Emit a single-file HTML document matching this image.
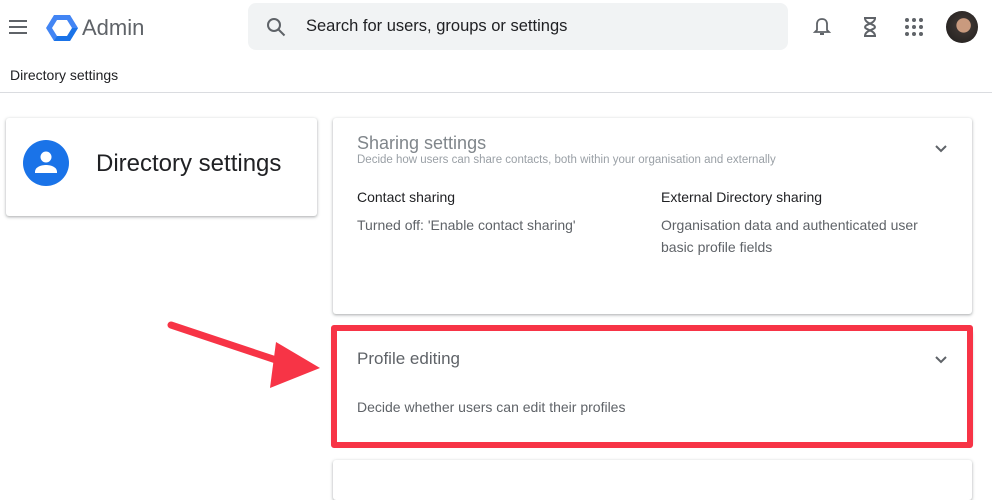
<!DOCTYPE html>
<html><head><meta charset="utf-8"><style>
*{box-sizing:border-box;margin:0;padding:0}
body{width:992px;height:479px;overflow:hidden;background:#fff;font-family:"Liberation Sans",Arial,sans-serif;position:relative;color:#202124}
.abs{position:absolute}
.card{position:absolute;background:#fff;border-radius:3px;box-shadow:0 1px 2px rgba(60,64,67,.3),0 1px 3px 1px rgba(60,64,67,.12)}
.g{color:#5f6368}
</style></head><body>
<svg class="abs" style="left:8px;top:17px" width="20" height="20" viewBox="0 0 20 20"><path d="M1 4h18M1 10h18M1 16h18" stroke="#5f6368" stroke-width="2"/></svg>
<svg class="abs" style="left:46px;top:14px" width="32" height="28" viewBox="0 0 32 28"><polygon points="8,1 24,1 32,14 24,27 8,27 0,14" fill="#4285f4"/><polygon points="16,14 32,14 24,27 8,27" fill="#1a73e8"/><polygon points="11,6 21,6 26,14 21,22 11,22 6,14" fill="#fff"/></svg>
<div class="abs g" style="left:82px;top:15px;font-size:22px;color:#5f6368">Admin</div>
<div class="abs" style="left:248px;top:3px;width:540px;height:47px;background:#f1f3f4;border-radius:8px"></div>
<svg class="abs" style="left:265px;top:16px" width="22" height="22" viewBox="0 0 22 22"><circle cx="9" cy="9" r="6" fill="none" stroke="#5f6368" stroke-width="2"/><path d="M13.5 13.5l6 6" stroke="#5f6368" stroke-width="2"/></svg>
<div class="abs" style="left:306px;top:17px;font-size:16.5px;color:#202124">Search for users, groups or settings</div>
<svg class="abs" style="left:812px;top:16px" width="20" height="22" viewBox="0 0 20 22"><path d="M10 3c-3 0-5 2-5 5v6l-2 2h14l-2-2V8c0-3-2-5-5-5z" fill="none" stroke="#5f6368" stroke-width="1.8"/><path d="M8 18h4" stroke="#5f6368" stroke-width="2"/></svg>
<svg class="abs" style="left:861px;top:15px" width="18" height="24" viewBox="0 0 18 24"><path d="M3 3h12M3 21h12M4 3c0 6 10 6 10 9s-10 3-10 9M14 3c0 6-10 6-10 9s10 3 10 9" fill="none" stroke="#5f6368" stroke-width="2"/></svg>
<svg class="abs" style="left:905px;top:18px" width="18" height="18" viewBox="0 0 18 18" fill="#5f6368"><circle cx="2" cy="2" r="2"/><circle cx="9" cy="2" r="2"/><circle cx="16" cy="2" r="2"/><circle cx="2" cy="9" r="2"/><circle cx="9" cy="9" r="2"/><circle cx="16" cy="9" r="2"/><circle cx="2" cy="16" r="2"/><circle cx="9" cy="16" r="2"/><circle cx="16" cy="16" r="2"/></svg>
<div class="abs" style="left:946px;top:11px;width:32px;height:32px;border-radius:50%;background:radial-gradient(circle at 55% 45%,#c99a7e 0 28%,#3a3330 30%,#2a2624 70%)"></div>
<div class="abs" style="left:10px;top:67px;font-size:14px">Directory settings</div>
<div class="abs" style="left:0;top:92px;width:992px;height:1px;background:#dadce0"></div>
<div class="card" style="left:6px;top:118px;width:311px;height:98px"></div>
<svg class="abs" style="left:23px;top:140px" width="46" height="46" viewBox="0 0 46 46"><circle cx="23" cy="23" r="23" fill="#1a73e8"/><circle cx="23" cy="17" r="5.5" fill="#fff"/><path d="M12 32c0-5 6-7 11-7s11 2 11 7v1H12z" fill="#fff"/></svg>
<div class="abs" style="left:96px;top:150px;font-size:24px">Directory settings</div>
<div class="card" style="left:333px;top:118px;width:639px;height:196px"></div>
<div class="abs g" style="left:357px;top:133px;font-size:18px;color:#80868b">Sharing settings</div>
<div class="abs" style="left:357px;top:154px;font-size:11.5px;color:#9aa0a6">Decide how users can share contacts, both within your organisation and externally</div>
<svg class="abs" style="left:934px;top:144px" width="14" height="10" viewBox="0 0 14 10"><path d="M2 2l5 5 5-5" fill="none" stroke="#5f6368" stroke-width="2"/></svg>
<div class="abs" style="left:357px;top:189px;font-size:14px">Contact sharing</div>
<div class="abs g" style="left:357px;top:217px;font-size:14px">Turned off: 'Enable contact sharing'</div>
<div class="abs" style="left:661px;top:189px;font-size:14px">External Directory sharing</div>
<div class="abs g" style="left:661px;top:214px;font-size:14px;line-height:22px;width:290px">Organisation data and authenticated user basic profile fields</div>
<div class="card" style="left:333px;top:330px;width:639px;height:114px"></div>
<div class="abs" style="left:331px;top:325px;width:642px;height:123px;border:6px solid #f73446;border-radius:3px"></div>
<div class="abs g" style="left:357px;top:349px;font-size:17px">Profile editing</div>
<svg class="abs" style="left:934px;top:355px" width="14" height="10" viewBox="0 0 14 10"><path d="M2 2l5 5 5-5" fill="none" stroke="#5f6368" stroke-width="2"/></svg>
<div class="abs g" style="left:357px;top:399px;font-size:14px">Decide whether users can edit their profiles</div>
<div class="card" style="left:333px;top:460px;width:639px;height:40px"></div>
<svg class="abs" style="left:160px;top:315px" width="170" height="80" viewBox="0 0 170 80"><path d="M11 10L125 48" stroke="#f73446" stroke-width="7" stroke-linecap="round"/><polygon points="160,53 116,27 110,73" fill="#f73446"/></svg>
</body></html>
